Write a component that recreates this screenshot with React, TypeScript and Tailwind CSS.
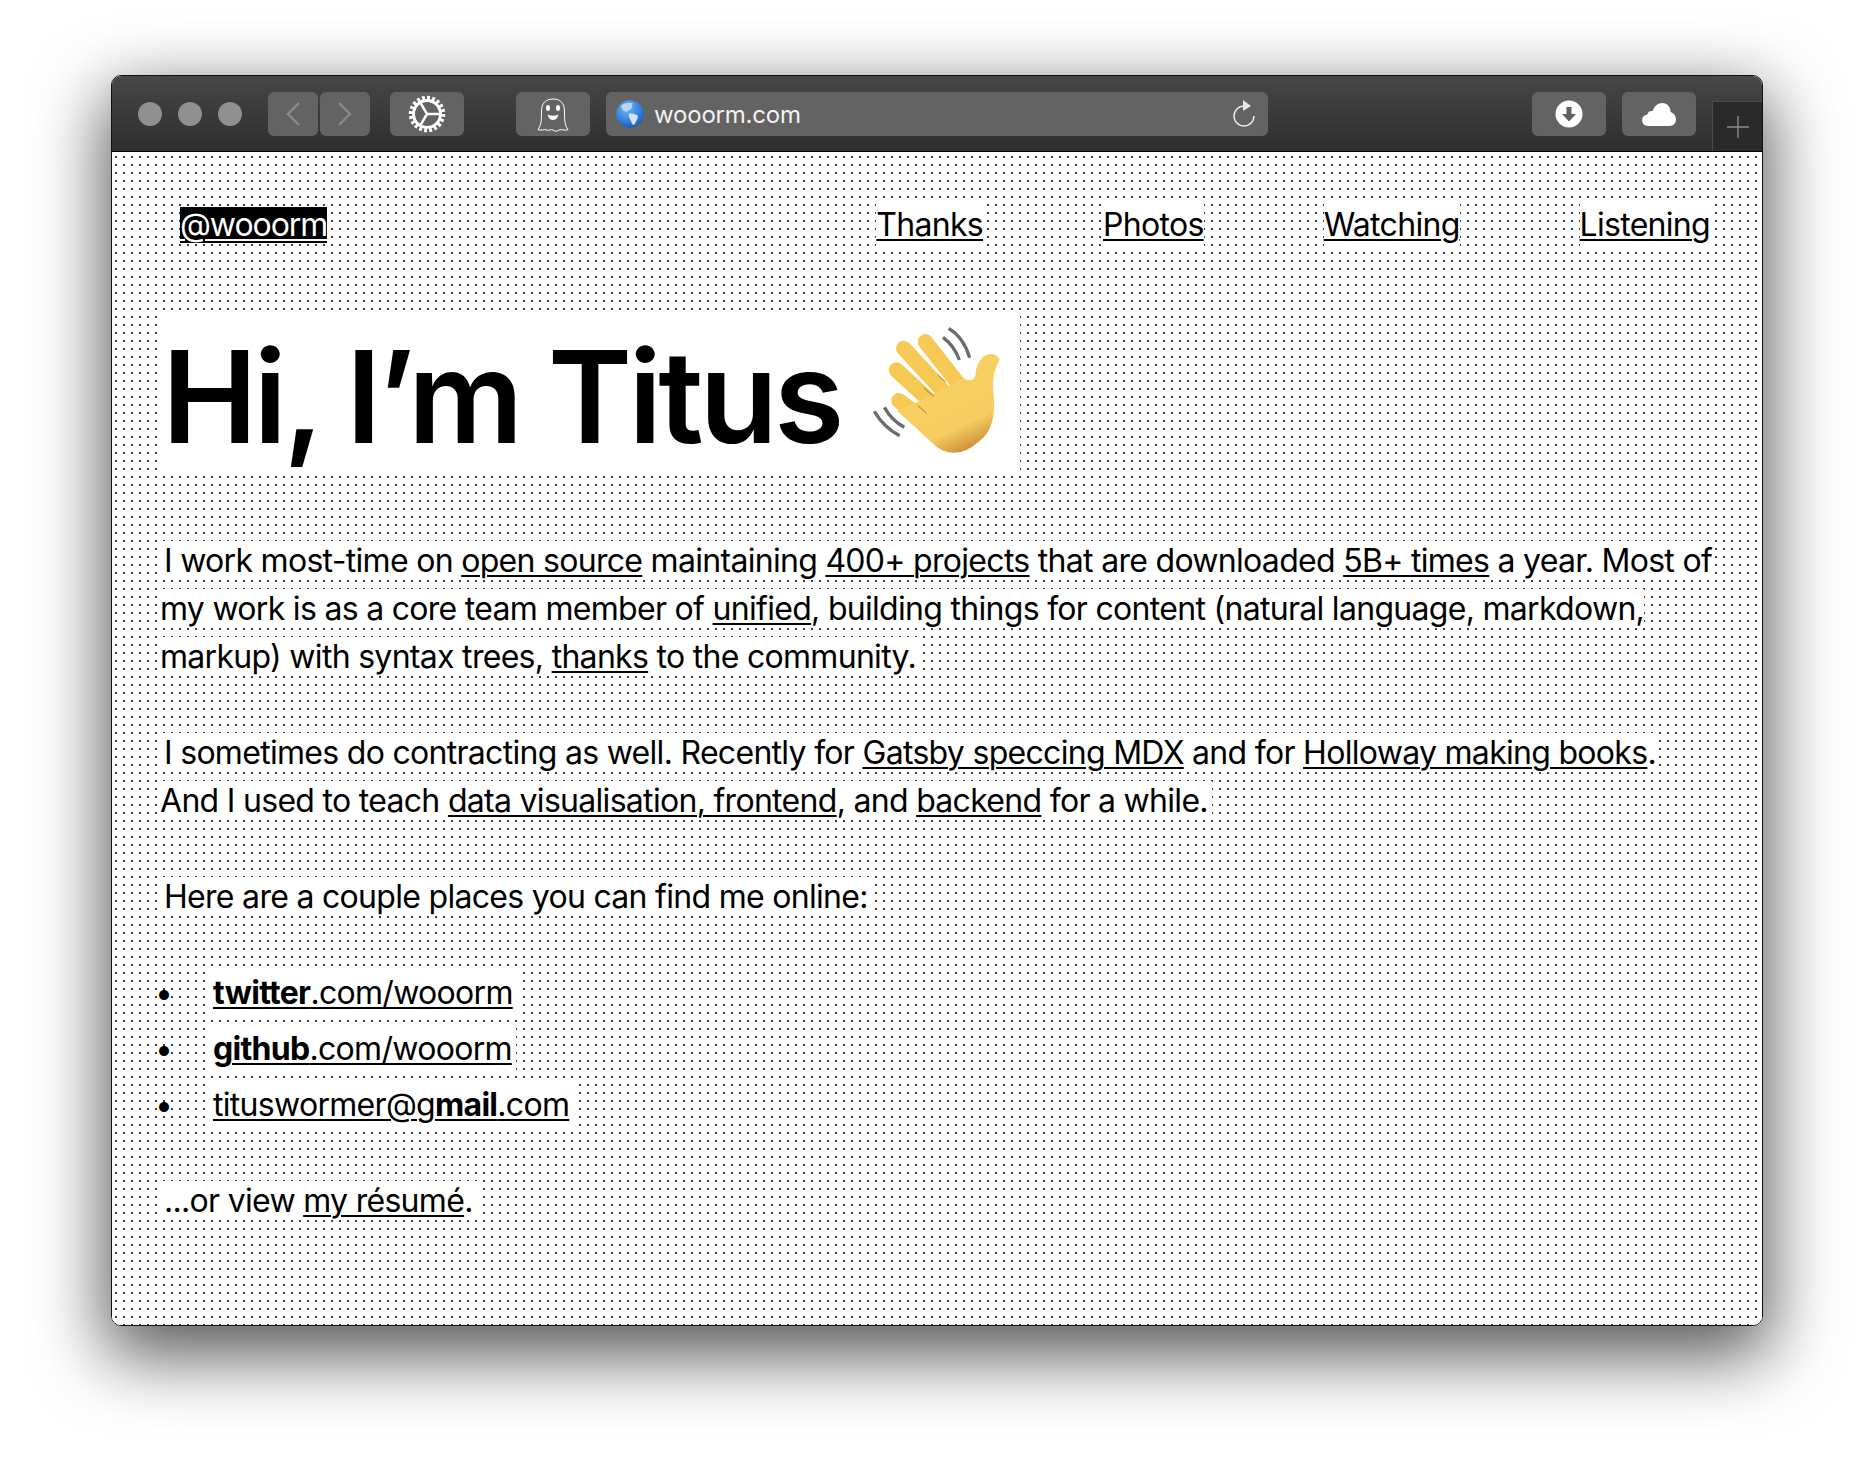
const ink = "bg-white px-1 [box-decoration-break:slice]";

function Gear() {
  return (
    <svg width="40" height="40" viewBox="0 0 40 40" fill="none" stroke="#fff">
      <circle cx="20" cy="20" r="13.5" strokeWidth="3" />
      <circle cx="20" cy="20" r="16" strokeWidth="4.5" strokeDasharray="2.8 2.2" />
      <path d="M20 20 L33 20 M20 20 L13.5 8.8 M20 20 L13.5 31.2" strokeWidth="2.5" />
    </svg>
  );
}

function Ghost() {
  return (
    <svg width="32" height="38" viewBox="0 0 32 38" fill="none" stroke="#fff" strokeWidth="1">
      <path d="M4.5 16 C4.5 8 9 4 16 4 C23 4 27.5 8 27.5 16 C27.5 24 27.5 30 31 34.5 C28 36.5 25 33.5 22 35 C20 36.5 18 36.5 16 35 C14 33.5 12 36.5 10 35 C7 33.5 4 36.5 1 34.5 C4.5 30 4.5 24 4.5 16 Z" />
      <ellipse cx="11" cy="13" rx="2" ry="3" fill="#fff" stroke="none" />
      <ellipse cx="21" cy="13" rx="2" ry="3" fill="#fff" stroke="none" />
      <path d="M10.5 19.5 Q16 22 21.5 19.5 Q20 25 16 25 Q12 25 10.5 19.5 Z" fill="#fff" stroke="none" />
    </svg>
  );
}

function Globe() {
  return (
    <svg width="28" height="28" viewBox="0 0 28 28">
      <defs>
        <radialGradient id="sea" cx="0.4" cy="0.3" r="0.8">
          <stop offset="0" stopColor="#7db8f0" />
          <stop offset="0.6" stopColor="#2f7fdc" />
          <stop offset="1" stopColor="#1a4fa8" />
        </radialGradient>
      </defs>
      <circle cx="14" cy="14" r="13.8" fill="url(#sea)" />
      <path d="M5 6 C8 2.5 14 2 17 3.5 C15 6 17 8 14 9.5 C11.5 10.5 11 13 9 11.5 C7 10.5 5 8.5 5 6 Z" fill="#b9d6f2" />
      <path d="M13 14 C16 13 20 14 22 16 C22 19 20 21 18.5 24.5 C16.5 25.5 15.5 23 15 21 C14 18 12 17 13 14 Z" fill="#d5e5f4" />
    </svg>
  );
}

function Reload() {
  return (
    <svg width="26" height="30" viewBox="0 0 26 30" fill="none">
      <path d="M13 7 A10 10 0 1 0 23 17" stroke="#e8e8e8" strokeWidth="1.5" />
      <path d="M12 1 L20 7 L12 12 Z" fill="#e8e8e8" />
    </svg>
  );
}

function Download() {
  return (
    <svg width="28" height="28" viewBox="0 0 28 28">
      <circle cx="14" cy="14" r="13.5" fill="#fff" />
      <path d="M11.5 7 H16.5 V14 H21 L14 21.5 L7 14 H11.5 Z" fill="#616161" />
    </svg>
  );
}

function Cloud() {
  return (
    <svg width="36" height="26" viewBox="0 0 34 26" preserveAspectRatio="none">
      <path d="M7 25 C3 25 1 22 1 19 C1 16 3 14 6 13.5 C6.5 10.5 9 9.5 11 10 C12.5 5 16 2 20 2 C25 2 28 6 28 11 C31 12 33 15 33 18.5 C33 22 31 25 27 25 Z" fill="#fff" />
    </svg>
  );
}

function Wave() {
  return (
    <svg width="220" height="190" viewBox="0 0 660 570" fill="none" className="absolute left-[-32px] top-[-14px]">
      <defs>
        <linearGradient id="skin" x1="0.2" y1="0" x2="0.7" y2="1">
          <stop offset="0" stopColor="#f9d15f" />
          <stop offset="0.75" stopColor="#f7cd62" />
          <stop offset="1" stopColor="#c98a32" />
        </linearGradient>
      </defs>
      <g stroke="#6c6c6c" strokeWidth="10">
        <path d="M335 88 Q380 115 398 176" />
        <path d="M318 115 Q352 140 367 183" />
        <path d="M112 337 Q140 385 188 410" />
        <path d="M142 325 Q165 365 202 385" />
      </g>
      <g stroke="#f6c954" strokeWidth="46" strokeLinecap="round">
        <path d="M265 128 L370 262" />
        <path d="M200 148 L315 272" />
        <path d="M178 213 L300 325" />
        <path d="M186 305 L290 385" />
      </g>
      <path d="M262 300 L378 238 Q402 252 415 232 Q415 195 440 172 Q470 155 488 180 Q465 225 468 270 Q485 385 425 428 Q360 485 300 445 L180 335 Z" fill="url(#skin)" />
      <g stroke="#b5752d" strokeWidth="3" strokeLinecap="round">
        <path d="M303 228 L325 248" />
        <path d="M262 268 L290 292" />
        <path d="M245 322 L268 342" />
      </g>
    </svg>
  );
}

function A({ children }: { children: React.ReactNode }) {
  return <a href="#" className="underline decoration-2 underline-offset-[3px]">{children}</a>;
}

const toolButton = "flex shrink-0 items-center justify-center h-[44px] rounded-[6px] bg-[#636363]";

export default function App() {
  return (
    <div className="w-[1874px] h-[1474px] bg-white pl-[111px] pt-[75px] font-['Inter',sans-serif] text-black">
      <div className="w-[1652px] h-[1251px] flex flex-col rounded-[10px] overflow-hidden border border-[#111] shadow-[0_24px_70px_6px_rgba(0,0,0,0.66)]">
        <header className="h-[76px] shrink-0 flex items-center pl-[26px] border-b border-black bg-gradient-to-b from-[#474747] to-[#2e2e2e] relative">
          <div className="flex gap-[16px]">
            <span className="w-[24px] h-[24px] rounded-full bg-[#8f8f8f]" />
            <span className="w-[24px] h-[24px] rounded-full bg-[#8f8f8f]" />
            <span className="w-[24px] h-[24px] rounded-full bg-[#8f8f8f]" />
          </div>
          <div className="flex gap-[2px] ml-[26px]">
            <div className={`${toolButton} w-[50px]`}>
              <svg width="16" height="26" viewBox="0 0 16 26" fill="none" stroke="#8a8a8a" strokeWidth="2.4"><path d="M14 2 L3 13 L14 24" /></svg>
            </div>
            <div className={`${toolButton} w-[50px]`}>
              <svg width="16" height="26" viewBox="0 0 16 26" fill="none" stroke="#8a8a8a" strokeWidth="2.4"><path d="M2 2 L13 13 L2 24" /></svg>
            </div>
          </div>
          <div className={`${toolButton} w-[74px] ml-[20px]`}><Gear /></div>
          <div className={`${toolButton} w-[74px] ml-[52px]`}><Ghost /></div>
          <div className={`${toolButton} w-[662px] ml-[16px] pl-[10px] pr-[11px] justify-start bg-[#6a6a6a]`}>
            <Globe />
            <span className="ml-[10px] pt-[2px] text-[24px] tracking-[-0.2px] text-[#f2f2f2]">wooorm.com</span>
            <span className="ml-auto flex"><Reload /></span>
          </div>
          <div className={`${toolButton} w-[74px] ml-[264px]`}><Download /></div>
          <div className={`${toolButton} w-[74px] ml-[16px]`}><Cloud /></div>
          <div className="absolute right-0 bottom-0 w-[50px] h-[50px] bg-[#2a2a2a] border-l border-t border-[#4b4b4b] flex items-center justify-center">
            <svg width="22" height="22" viewBox="0 0 22 22" stroke="#8c8c8c" strokeWidth="1.4"><path d="M11 0 V22 M0 11 H22" /></svg>
          </div>
        </header>

        <main className="flex-1 pl-[48px] pr-[46px] pt-[49px] text-[32px] leading-[48px] tracking-[-0.7px] bg-[#fff] bg-[conic-gradient(from_270deg_at_2px_2px,#3d3d3d_25%,#fff_0)] bg-size-[8px_8px] bg-position-[3px_4px]">
          <nav className="flex items-center pl-[20px] pr-[6px]">
            <a href="#" className="bg-black text-white underline decoration-2 underline-offset-[3px] leading-[36px] tracking-[-1.05px]">@wooorm</a>
            <div className="ml-auto flex gap-[120px]">
              <span className="bg-white"><A>Thanks</A></span>
              <span className="bg-white"><A>Photos</A></span>
              <span className="bg-white"><A>Watching</A></span>
              <span className="bg-white"><A>Listening</A></span>
            </div>
          </nav>

          <h1 className="mt-[64px] mb-[60px] text-[128px] leading-[160px] font-semibold tracking-[-3.85px]">
            <span className="inline-block bg-white w-[860px] h-[160px] pl-[2px] relative">
              Hi, I’m Titus <span className="inline-block w-[130px] h-[130px] relative"><Wave /></span>
            </span>
          </h1>

          <p className="mb-[48px]">
            <span className={ink}>
              I work most-time on <A>open source</A> maintaining <A>400+ projects</A> that are downloaded <A>5B+ times</A> a year. Most of my work is as a core team member of <A>unified</A>, building things for content (natural language, markdown, markup) with syntax trees, <A>thanks</A> to the community.
            </span>
          </p>
          <p className="mb-[48px]">
            <span className={ink}>
              I sometimes do contracting as well. Recently for <A>Gatsby speccing MDX</A> and for <A>Holloway making books</A>. And I used to teach <A>data visualisation, frontend</A>, and <A>backend</A> for a while.
            </span>
          </p>
          <p className="mb-[48px]">
            <span className={ink}>Here are a couple places you can find me online:</span>
          </p>

          <ul className="mb-[48px] flex flex-col gap-[8px]">
            <li className="flex">
              <span className="w-[49px] -ml-[5px] mr-[5px]">•</span>
              <span className={ink}><A><b>twitter</b>.com/wooorm</A></span>
            </li>
            <li className="flex">
              <span className="w-[49px] -ml-[5px] mr-[5px]">•</span>
              <span className={ink}><A><b>github</b>.com/wooorm</A></span>
            </li>
            <li className="flex">
              <span className="w-[49px] -ml-[5px] mr-[5px]">•</span>
              <span className={ink}><A>tituswormer@g<b>mail</b>.com</A></span>
            </li>
          </ul>

          <p>
            <span className={ink}>...or view <A>my résumé</A>.</span>
          </p>
        </main>
      </div>
    </div>
  );
}
